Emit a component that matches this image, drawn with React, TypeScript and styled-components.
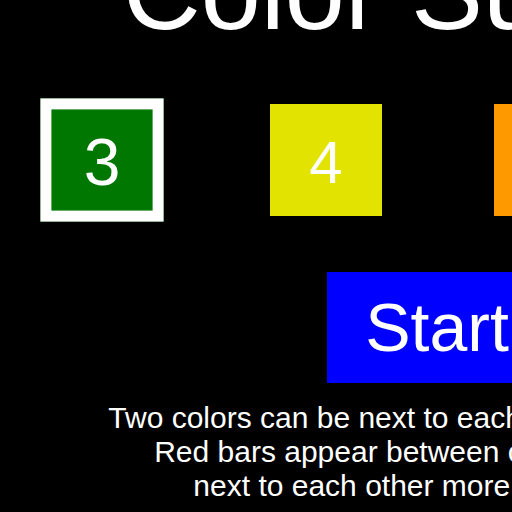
import styled, { createGlobalStyle } from "styled-components";

const GlobalStyle = createGlobalStyle`
  body {
    margin: 0;
    background: #000;
    color: #fff;
    font-family: "Liberation Sans", Arial, sans-serif;
    overflow: hidden;
  }
`;

const Page = styled.div`
  width: 852px;
  display: flex;
  flex-direction: column;
  align-items: center;
`;

const Title = styled.h1`
  margin: -71px 0 0 48px;
  font-size: 108px;
  font-weight: normal;
  white-space: nowrap;
`;

const SquareRow = styled.div`
  align-self: flex-start;
  display: flex;
  flex-direction: row;
  gap: 112px;
  margin-top: 50px;
  padding-left: 46px;
`;

const Square = styled.div<{ $color: string; $selected?: boolean }>`
  flex: none;
  box-sizing: border-box;
  width: 112px;
  height: 112px;
  display: flex;
  align-items: center;
  justify-content: center;
  padding-top: 4px;
  background: ${({ $color }) => $color};
  border: ${({ $selected }) => ($selected ? "10px solid #fff" : "none")};
  transform: ${({ $selected }) => ($selected ? "scale(1.1)" : "none")};
  font-size: 60px;
  color: #fff;
`;

const StartButton = styled.button`
  margin: 56px 0 0 22px;
  padding: 16px 38px 17px;
  border: none;
  background: #0000ff;
  color: #fff;
  font-family: "Liberation Sans", Arial, sans-serif;
  font-size: 68px;
  line-height: normal;
  white-space: nowrap;
`;

const Rules = styled.p`
  margin: 18px 0 0;
  font-size: 30px;
  text-align: center;
  white-space: nowrap;
`;

const squares = [
  { n: 3, color: "#007700", selected: true },
  { n: 4, color: "#e3e300" },
  { n: 5, color: "#ff9900" },
  { n: 1, color: "#cc0000" },
];

export default function App() {
  return (
    <>
      <GlobalStyle />
      <Page>
        <Title>Color Sudoku</Title>
        <SquareRow>
          {squares.map((s) => (
            <Square key={s.n} $color={s.color} $selected={s.selected}>
              {s.n}
            </Square>
          ))}
        </SquareRow>
        <StartButton>Start</StartButton>
        <Rules>
          Two colors can be next to each other only once.
          <br />
          Red bars appear between colors that are
          <br />
          next to each other more than once.
        </Rules>
      </Page>
    </>
  );
}
